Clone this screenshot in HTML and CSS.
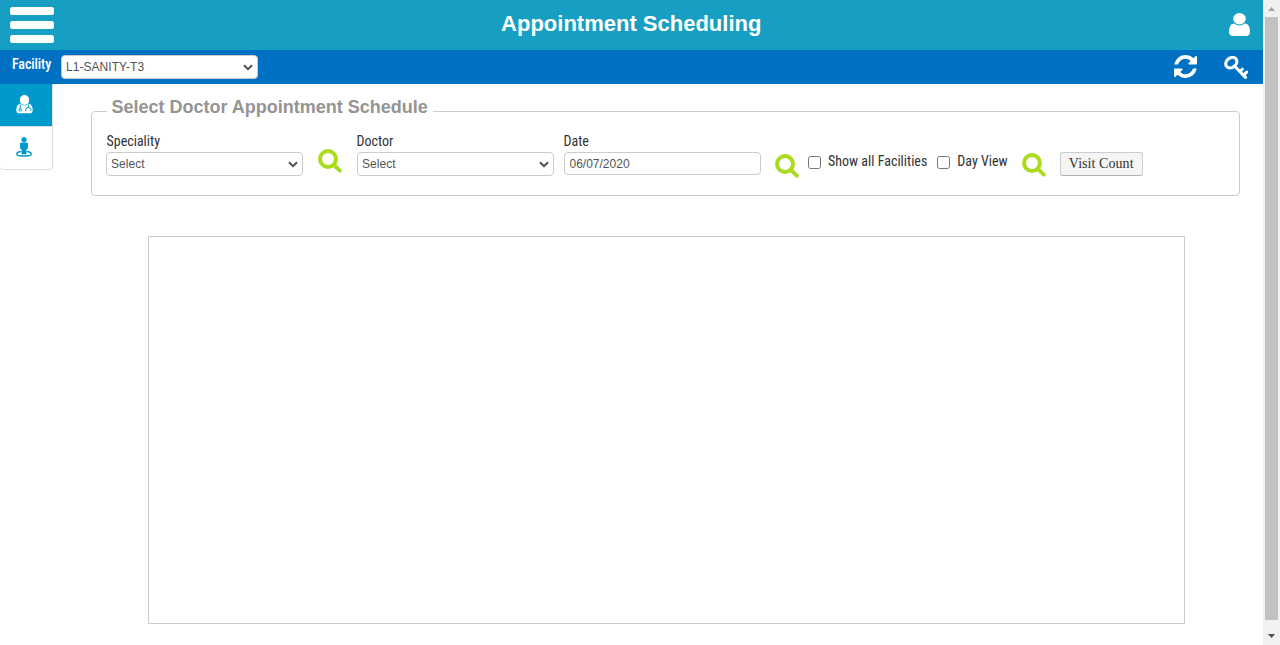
FILE: index.html
```html
<!DOCTYPE html>
<html lang="en">
<head>
<meta charset="utf-8">
<title>Appointment Scheduling</title>
<link rel="stylesheet" href="styles.css">
</head>
<body>
<div class="page">
  <header class="topbar">
    <div class="burger"><span></span><span></span><span></span></div>
    <h1>Appointment Scheduling</h1>
    <svg class="user" viewBox="256 128 1280 1536" preserveAspectRatio="none"><path d="M1536 1399q0 109-62.500 187t-150.500 78h-854q-88 0-150.500-78t-62.500-187q0-85 8.500-160.500t31.500-152 58.500-131 94-89 134.500-34.500q131 128 313 128t313-128q76 0 134.500 34.500t94 89 58.500 131 31.500 152 8.500 160.500zm-256-887q0 159-112.500 271.500t-271.500 112.500-271.500-112.500-112.500-271.500 112.500-271.500 271.500-112.500 271.500 112.500 112.500 271.500z"/></svg>
  </header>
  <div class="facility-bar">
    <label class="cond facility-label" for="facility">Facility</label>
    <div class="select facility"><select id="facility"><option>L1-SANITY-T3</option></select><svg viewBox="0 0 10 7"><path d="M1 1.200 5 5.200 9 1.200"/></svg></div>
    <svg class="refresh" viewBox="128 128 1536 1536"><path d="M1639 1056q0 5-1 7-64 268-268 434.500t-478 166.500q-146 0-282.500-55t-243.500-157l-129 129q-19 19-45 19t-45-19-19-45v-448q0-26 19-45t45-19h448q26 0 45 19t19 45-19 45l-137 137q71 66 161 102t187 36q134 0 250-65t186-179q11-17 53-117 8-23 30-23h192q13 0 22.500 9.500t9.500 22.500zm25-800v448q0 26-19 45t-45 19h-448q-26 0-45-19t-19-45 19-45l138-138q-148-137-349-137-134 0-250 65t-186 179q-11 17-53 117-8 23-30 23h-199q-13 0-22.500-9.500t-9.500-22.500v-7q65-268 270-434.500t480-166.500q146 0 284 55.500t245 156.500l130-129q19-19 45-19t45 19 19 45z"/></svg>
    <svg class="key" viewBox="0 0 24.500 24"><g fill="none" stroke="#fff" stroke-linecap="round" stroke-linejoin="round"><ellipse cx="7.300" cy="6.700" rx="6" ry="4.700" transform="rotate(-40 7.300 6.700)" stroke-width="3.200"/><path d="M11 10.500 21.500 21.300" stroke-width="3.200"/><path d="M16.300 15.200 18.300 13.200M20.300 18.600 22.800 16" stroke-width="3"/></g></svg>
  </div>
  <div class="content">
    <nav class="side">
      <a class="tab active"><svg width="17" height="19" viewBox="0 0 17 19"><ellipse cx="8.500" cy="5" rx="4.700" ry="5" fill="#fff"/><path d="M4.200 8.500Q.3 9.800.3 15.300.3 18.200 3 18.200H14Q16.700 18.200 16.700 15.300 16.700 9.800 12.800 8.500 8.500 12.500 4.200 8.500Z" fill="#fff"/><path d="M4.200 9.500V13.600M12.400 9.500V12.300M9.800 16V14.500Q9.800 12.500 12.300 12.500T14.800 14.500V16" fill="none" stroke="#0099cd" stroke-width="1"/><circle cx="4.200" cy="14.800" r="1.300" fill="#fff" stroke="#0099cd"/></svg></a>
      <a class="tab"><svg width="16" height="20" viewBox="0 0 16 20"><g fill="#0099cd"><circle cx="8" cy="2.600" r="2.600"/><path d="M5.300 5.500H10.700Q12 5.500 12 7V11Q12 12 10.500 12V16.700Q10.500 17.300 9.800 17.300H6.200Q5.500 17.300 5.500 16.700V12Q4 12 4 11V7Q4 5.500 5.300 5.500Z"/></g><path d="M5 14.400Q.8 15 .8 16.700.8 19.100 8 19.100T15.200 16.700Q15.200 15 11 14.400" fill="none" stroke="#0099cd" stroke-width="1.500"/></svg></a>
    </nav>
    <main>
      <fieldset>
        <legend>Select Doctor Appointment Schedule</legend>
        <div class="filters">
          <div class="field"><label class="cond" for="spec">Speciality</label><div class="select"><select id="spec"><option>Select</option></select><svg viewBox="0 0 10 7"><path d="M1 1.200 5 5.200 9 1.200"/></svg></div></div>
          <svg class="search s1" viewBox="0 0 24 24"><circle cx="10" cy="10" r="8"/><path d="M16 16 21.800 21.600"/></svg>
          <div class="field"><label class="cond doctor" for="doc">Doctor</label><div class="select"><select id="doc"><option>Select</option></select><svg viewBox="0 0 10 7"><path d="M1 1.200 5 5.200 9 1.200"/></svg></div></div>
          <div class="field date"><label class="cond" for="date">Date</label><input id="date" class="text" type="text" value="06/07/2020"></div>
          <svg class="search s2" viewBox="0 0 24 24"><circle cx="10" cy="10" r="8"/><path d="M16 16 21.800 21.600"/></svg>
          <input class="check" type="checkbox" id="all"><label class="cond inline" for="all">Show all Facilities</label>
          <input class="check c2" type="checkbox" id="day"><label class="cond inline" for="day">Day View</label>
          <svg class="search s3" viewBox="0 0 24 24"><circle cx="10" cy="10" r="8"/><path d="M16 16 21.800 21.600"/></svg>
          <button class="visit">Visit Count</button>
        </div>
      </fieldset>
      <div class="schedule"></div>
    </main>
  </div>
</div>
<aside class="scroll"><svg width="17" height="17"><path d="M5 11H12L8.500 7Z" fill="#a3a3a3"/></svg><div class="thumb"></div><svg width="17" height="25"><path d="M5 14H12L8.500 18Z" fill="#505050"/></svg></aside>
</body>
</html>
```
FILE: styles.css
```css
* { box-sizing: border-box; }
body { margin: 0; height: 645px; display: flex; overflow: hidden; background: #fff; font-family: "Liberation Sans", Arial, sans-serif; }
svg { display: block; flex: none; }
.page { width: 1263px; }
.topbar { height: 50px; background: #179fc3; display: flex; padding: 0 13.500px 0 9.500px; }
.burger { width: 44px; padding-top: 7px; display: flex; flex-direction: column; gap: 6px; }
.burger span { height: 8px; border-radius: 2.5px; background: #fff; }
h1 { flex: 1; margin: 0; padding-right: 19.500px; text-align: center; color: #fff; font-size: 22px; line-height: 48px; }
.user { width: 21px; height: 23px; margin-top: 12.500px; fill: #fff; }
.facility-bar { height: 34px; background: #0071c2; display: flex; padding: 5px 15px 0 12px; }
.cond { display: block; font-family: "Roboto Condensed", Roboto, sans-serif; font-stretch: 75%; font-size: 14px; line-height: 16px; color: #333; white-space: nowrap; }
.facility-label { width: 49px; margin-top: 1px; color: #fff; font-weight: 500; letter-spacing: -.1px; }
.select { position: relative; width: 197px; height: 24px; }
.select select { appearance: none; display: block; width: 100%; height: 100%; border: 1px solid #ccc; border-radius: 4px; background: #fff; padding: 0 4px; font: 12px "Liberation Sans", Arial, sans-serif; letter-spacing: .05px; color: #555; }
.select svg { position: absolute; right: 5px; top: 9px; width: 10px; height: 7px; fill: none; stroke: #505050; stroke-width: 2; }
.refresh { width: 23px; height: 23px; margin: 0 1px 0 auto; fill: #fff; }
.key { width: 24.500px; height: 24px; margin: .5px 0 0 26px; }
.content { display: flex; }
.side { width: 53px; height: 86px; border: 1px solid #ddd; border-width: 0 1px 1px 0; border-radius: 0 0 4px 4px; }
.tab { display: block; height: 43px; padding: 11px 0 0 16px; }
.tab.active { height: 42px; background: #0099cd; }
.tab:last-child { border-top: 1px solid #ddd; padding-top: 10px; }
main { padding: 13px 0 0 38px; }
fieldset { width: 1149px; height: 99px; margin: 0; border: 1px solid #ccc; border-radius: 4px; padding: 0 14px; }
legend { height: 28px; margin-left: .5px; padding: 0 5px; color: #949494; font-size: 18px; font-weight: bold; line-height: 20px; }
.filters { display: flex; padding-top: 8px; }
.field { width: 197px; }
.field label { margin-bottom: 3px; padding-left: .5px; }
.field .doctor { padding-left: 0; margin-left: -.5px; }
.date { margin-left: 10px; }
.date label { padding-left: 0; margin-left: -.5px; }
.text { display: block; width: 197px; height: 23px; border: 1px solid #ccc; border-radius: 4px; padding: 0 4.500px; font: 12px "Liberation Sans", Arial, sans-serif; color: #555; }
.search { width: 24px; height: 24px; fill: none; stroke: #aadb1e; stroke-width: 4; stroke-linecap: round; }
.s1 { margin: 16px 15px 0; }
.s2 { margin: 21px 9px 0 14px; }
.s3 { margin: 20px 14px 0; }
.check { width: 13px; height: 13px; margin: 23px 7px 0 0; }
.c2 { margin-left: 10px; }
.inline { margin-top: 20px; }
.visit { width: 83px; height: 24px; margin-top: 19px; padding: 0; border: 1px solid #ccc; border-bottom-color: #b3b3b3; border-radius: 3px; background: #f5f5f5; color: #333; font: 14px "Liberation Serif", "Times New Roman", serif; letter-spacing: .06px; }
.schedule { width: 1037px; height: 388px; margin: 40px 0 0 57px; border: 1px solid #ccc; }
.scroll { width: 17px; height: 645px; background: #f1f1f1; }
.thumb { width: 13px; height: 603px; margin-left: 2px; background: #c1c1c1; }
```
